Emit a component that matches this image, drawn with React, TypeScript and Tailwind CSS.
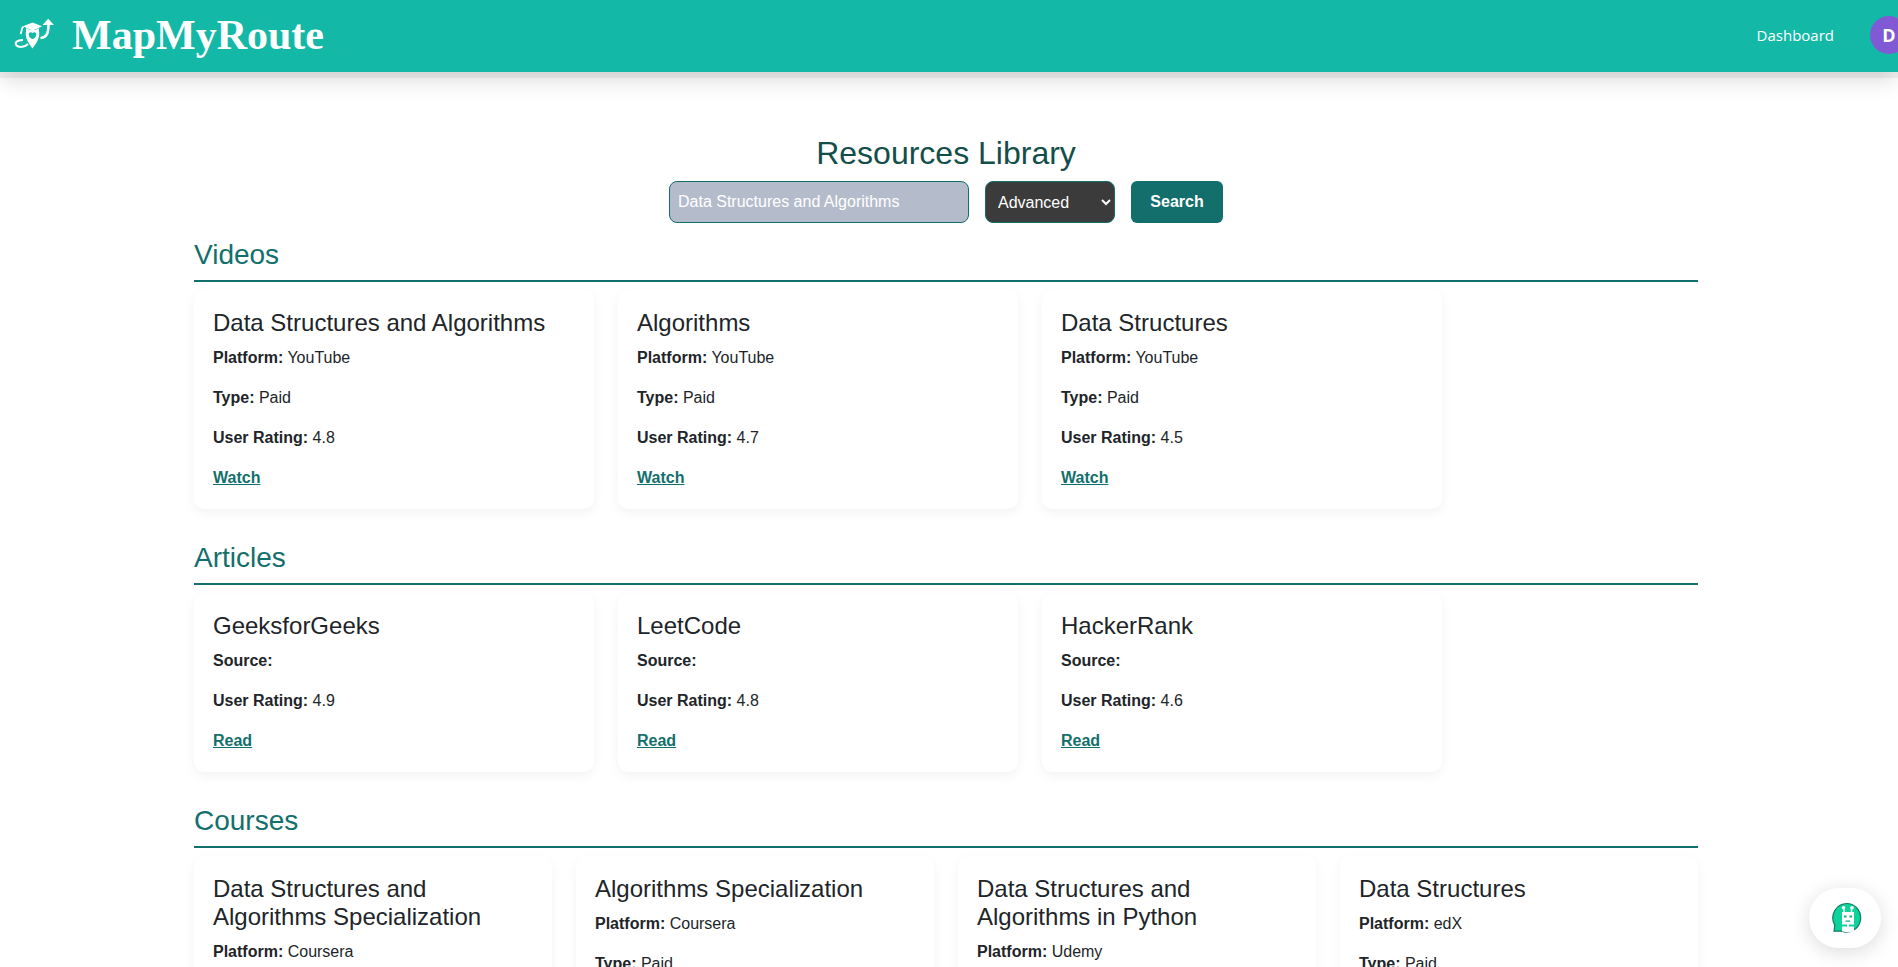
import type { ReactNode } from "react";

type Resource = { title: string; details: [string, string][] };

const videos: Resource[] = [
  { title: "Data Structures and Algorithms", details: [["Platform:", "YouTube"], ["Type:", "Paid"], ["User Rating:", "4.8"]] },
  { title: "Algorithms", details: [["Platform:", "YouTube"], ["Type:", "Paid"], ["User Rating:", "4.7"]] },
  { title: "Data Structures", details: [["Platform:", "YouTube"], ["Type:", "Paid"], ["User Rating:", "4.5"]] },
];

const articles: Resource[] = [
  { title: "GeeksforGeeks", details: [["Source:", ""], ["User Rating:", "4.9"]] },
  { title: "LeetCode", details: [["Source:", ""], ["User Rating:", "4.8"]] },
  { title: "HackerRank", details: [["Source:", ""], ["User Rating:", "4.6"]] },
];

const courses: Resource[] = [
  { title: "Data Structures and Algorithms Specialization", details: [["Platform:", "Coursera"], ["Type:", "Paid"]] },
  { title: "Algorithms Specialization", details: [["Platform:", "Coursera"], ["Type:", "Paid"]] },
  { title: "Data Structures and Algorithms in Python", details: [["Platform:", "Udemy"], ["Type:", "Paid"]] },
  { title: "Data Structures", details: [["Platform:", "edX"], ["Type:", "Paid"]] },
];

function RouteLogo() {
  return (
    <svg viewBox="0 0 40 34" className="h-[34px] w-10" fill="none" aria-hidden="true">
      <path d="M18.5 4.5 L28 8.2 L18.5 12.8 L9 8.2 Z" fill="#fff" />
      <path d="M12 10 V14 C15 12 22 12 25 14 V10 L18.5 13.2 Z" fill="#fff" />
      <path d="M9.5 8.5 C7 10 8.500 12 6.500 16" stroke="#fff" strokeWidth="1.8" />
      <path
        fillRule="evenodd"
        d="M12.2 12.5 C10.500 18 13.500 24 18.500 30.500 C23.500 24 26.500 18 24.800 12.500 C21 11.500 16 11.500 12.200 12.500 Z M18.500 15 C20 13.600 22.300 14.200 22.300 16.500 C22.300 18.800 20.500 20.500 18.500 21 C16.500 20.500 14.700 18.800 14.700 16.500 C14.700 14.200 17 13.600 18.500 15 Z"
        fill="#fff"
      />
      <path d="M9 22 C2.5 22 0.5 25 2.500 27.500 C5 30 11 29 14 26" stroke="#fff" strokeWidth="2" />
      <path d="M26.500 20 C33 19.500 34.500 15 34.500 6" stroke="#fff" strokeWidth="2.600" />
      <path d="M34.200 0.800 L40 7 H28.500 Z" fill="#fff" />
    </svg>
  );
}

function BotIcon() {
  return (
    <svg viewBox="0 0 32 32" className="size-8" aria-hidden="true">
      <path d="M16.500 1.500 A14.300 14.300 0 1 1 10.500 29.200 L3 29.200 L3.800 23 A14.300 14.300 0 0 1 16.500 1.500 Z" fill="#0bd39b" stroke="#13795f" strokeWidth="1.200" />
      <path d="M13 10 V6 M20.500 10 V6" stroke="#fff" strokeWidth="1.500" />
      <circle cx="12.500" cy="5.800" r="1.800" fill="#fff" />
      <circle cx="21" cy="5.800" r="1.800" fill="#fff" />
      <rect x="11" y="10" width="12" height="12.500" fill="#fff" />
      <path d="M13 13.500 h2.500 v2 h-2.500 Z M18.500 13.500 h2.500 v2 h-2.500 Z M14.500 18.500 h4.500 v1.200 h-4.500 Z" fill="#0fae82" />
      <path d="M17 22 V25" stroke="#fff" strokeWidth="2" />
      <path d="M11 24.500 H23 V29.200 C19 30.700 14.500 30.700 11 29.200 Z" fill="#fff" />
    </svg>
  );
}

function Card({ resource, action }: { resource: Resource; action: string }) {
  return (
    <article className="max-w-[400px] flex-1 rounded-[10px] bg-white p-[19px] shadow-[0_4px_12px_rgba(0,0,0,0.05)]">
      <h3 className="mb-[9px] text-2xl leading-[28px]">{resource.title}</h3>
      {resource.details.map(([label, value]) => (
        <p key={label} className="mb-4">
          <strong>{label}</strong> {value}
        </p>
      ))}
      <a href="#" className="block w-fit font-bold text-[#136f6c] underline">
        {action}
      </a>
    </article>
  );
}

function Section({ title, children }: { title: string; children: ReactNode }) {
  return (
    <section className="mb-8">
      <h2 className="mb-2 border-b-2 border-[#136f6c] pb-2 text-[28px] leading-[34px] text-[#136f6c]">{title}</h2>
      <div className="flex gap-6">{children}</div>
    </section>
  );
}

export default function App() {
  return (
    <div className="h-screen overflow-hidden bg-white font-['Liberation_Sans',Arial,sans-serif] text-base text-[#212529]">
      <header className="relative flex h-[72px] items-center justify-between bg-[#14b8a6] pb-[2px] pl-[14px] text-white shadow-[0_6px_0_rgba(31,41,55,0.06),0_10px_20px_-2px_rgba(0,0,0,0.14)]">
        <a href="#" className="flex items-center gap-[18px]">
          <RouteLogo />
          <span className="font-['Liberation_Serif','Times_New_Roman',serif] text-[42px] leading-[48px] font-bold">MapMyRoute</span>
        </a>
        <nav className="-mr-[10px] flex items-center gap-9 font-['Open_Sans',sans-serif]">
          <a href="#" className="text-[15px]">Dashboard</a>
          <button type="button" className="size-[38px] rounded-full bg-[#805ad5] text-lg font-bold">D</button>
        </nav>
      </header>

      <main className="pt-[62px] pr-[6px]">
        <div className="mx-auto max-w-[1504px]">
          <h1 className="mb-2 text-center text-[32px] leading-[39px] text-[#134e4a]">Resources Library</h1>
          <form className="mb-[15px] flex h-[42px] justify-center gap-4" onSubmit={(e) => e.preventDefault()}>
            <input
              type="text"
              aria-label="Topic"
              defaultValue="Data Structures and Algorithms"
              className="w-[300px] rounded-lg border border-[#136f6c] bg-[#b4bccb] px-2 text-white"
            />
            <select aria-label="Level" defaultValue="Advanced" className="w-[130px] rounded-lg border border-[#136f6c] bg-[#3b3b3b] px-2 text-white">
              <option>Beginner</option>
              <option>Intermediate</option>
              <option>Advanced</option>
            </select>
            <button type="submit" className="w-[92px] rounded-md bg-[#136f6c] font-bold text-white">
              Search
            </button>
          </form>

          <Section title="Videos">
            {videos.map((r) => <Card key={r.title} resource={r} action="Watch" />)}
          </Section>
          <Section title="Articles">
            {articles.map((r) => <Card key={r.title} resource={r} action="Read" />)}
          </Section>
          <Section title="Courses">
            {courses.map((r) => <Card key={r.title} resource={r} action="Enroll" />)}
          </Section>
        </div>
      </main>

      <button
        type="button"
        aria-label="Open chat"
        className="fixed right-[17px] bottom-[19px] flex h-[60px] w-[72px] items-center justify-center rounded-[30px] bg-white pl-1 shadow-[0_4px_20px_rgba(0,0,0,0.14)]"
      >
        <BotIcon />
      </button>
    </div>
  );
}
